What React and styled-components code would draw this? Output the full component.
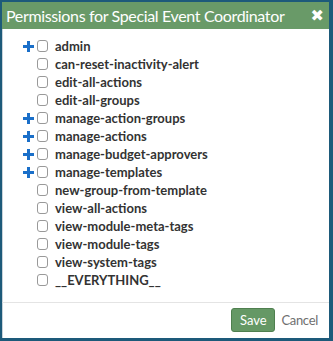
import React from "react";
import styled, { createGlobalStyle } from "styled-components";

const GlobalStyle = createGlobalStyle`
  html, body {
    margin: 0;
    padding: 0;
    background: #ffffff;
  }
  * {
    box-sizing: border-box;
  }
`;

const permissions = [
  { name: "admin", expandable: true },
  { name: "can-reset-inactivity-alert" },
  { name: "edit-all-actions" },
  { name: "edit-all-groups" },
  { name: "manage-action-groups", expandable: true },
  { name: "manage-actions", expandable: true },
  { name: "manage-budget-approvers", expandable: true },
  { name: "manage-templates", expandable: true },
  { name: "new-group-from-template" },
  { name: "view-all-actions" },
  { name: "view-module-meta-tags" },
  { name: "view-module-tags" },
  { name: "view-system-tags" },
  { name: "__EVERYTHING__" },
];

const PlusIcon = () => (
  <svg width="11" height="11" viewBox="0 0 11 11">
    <rect x="4" y="0" width="3" height="11" fill="#1a6fc9" />
    <rect x="0" y="4" width="11" height="3" fill="#1a6fc9" />
  </svg>
);

const App = () => {
  return (
    <>
      <GlobalStyle />
      <Dialog>
        <Header>
          <Title>Permissions for Special Event Coordinator</Title>
          <CloseButton aria-label="close">✖</CloseButton>
        </Header>
        <Body>
          <List>
            {permissions.map((p) => (
              <Row key={p.name}>
                <Expander>{p.expandable && <PlusIcon />}</Expander>
                <Checkbox type="checkbox" />
                <Label>{p.name}</Label>
              </Row>
            ))}
          </List>
        </Body>
        <Footer>
          <SaveButton>Save</SaveButton>
          <CancelLink>Cancel</CancelLink>
        </Footer>
      </Dialog>
    </>
  );
};

export default App;

const Dialog = styled.div`
  width: 333px;
  height: 341px;
  display: flex;
  flex-direction: column;
  border: 2px solid #1d5a7a;
  border-right-width: 4px;
  border-bottom-width: 3px;
  background: #ffffff;
  font-family: "Lato", "Open Sans", sans-serif;
`;

const Header = styled.div`
  height: 27px;
  flex: none;
  display: flex;
  align-items: center;
  justify-content: space-between;
  padding: 0 5px 0 4px;
  background: #699a68;
  color: #ffffff;
`;

const Title = styled.h1`
  margin: 0;
  font-size: 16px;
  font-weight: 400;
  letter-spacing: -0.35px;
  line-height: 27px;
  white-space: nowrap;
`;

const CloseButton = styled.span`
  font-family: "DejaVu Sans", sans-serif;
  font-size: 16px;
  font-weight: 700;
  line-height: 1;
  cursor: pointer;
`;

const Body = styled.div`
  flex: 1;
  padding: 8px 0 0 20px;
  border-left: 1px solid #c9d3da;
`;

const List = styled.ul`
  list-style: none;
  margin: 0;
  padding: 0;
`;

const Row = styled.li`
  height: 18px;
  display: flex;
  align-items: center;
`;

const Expander = styled.span`
  width: 11px;
  height: 11px;
  display: flex;
  align-items: center;
  justify-content: center;
`;

const Checkbox = styled.input`
  appearance: none;
  width: 11px;
  height: 12px;
  margin: 0 7px 0 3px;
  border: 1px solid #999999;
  border-radius: 3px;
  background: #ffffff;
`;

const Label = styled.span`
  font-size: 13px;
  font-weight: 700;
  color: #333333;
`;

const Footer = styled.div`
  flex: none;
  height: 36px;
  display: flex;
  align-items: center;
  justify-content: flex-end;
  gap: 6px;
  padding: 0 11px 2px 0;
  border-top: 1px solid #e4e4e4;
  border-left: 1px solid #c9d3da;
`;

const SaveButton = styled.button`
  width: 44px;
  height: 24px;
  padding: 0;
  font-family: "Lato", "Open Sans", sans-serif;
  font-size: 13px;
  color: #ffffff;
  background: #659865;
  border: 1px solid #4f7f4f;
  border-radius: 3px;
  cursor: pointer;
`;

const CancelLink = styled.span`
  font-size: 13px;
  letter-spacing: -0.3px;
  color: #6f6f6f;
  cursor: pointer;
`;
